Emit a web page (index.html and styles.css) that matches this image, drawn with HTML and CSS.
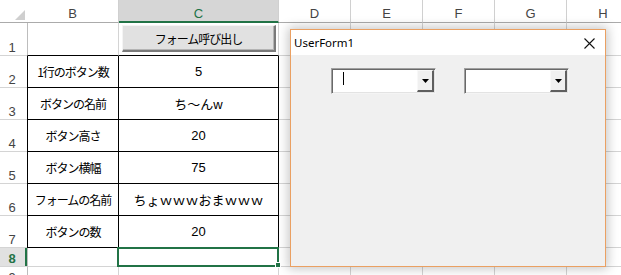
FILE: index.html
```html
<!DOCTYPE html>
<html lang="ja">
<head>
<meta charset="utf-8">
<link rel="stylesheet" href="styles.css">
</head>
<body>
<div class="sheet">
  <div class="hdr corner"><svg width="27" height="23" viewBox="0 0 27 23"><polygon points="25,10 25,20 15,20" fill="#cfcfcf"/></svg></div>
  <div class="hdr col b">B</div>
  <div class="hdr col sel">C</div>
  <div class="hdr col">D</div>
  <div class="hdr col">E</div>
  <div class="hdr col">F</div>
  <div class="hdr col">G</div>
  <div class="hdr col">H</div>

  <div class="rh">1</div>
  <div class="c b top"></div>
  <div class="c top btncell"><div class="xlbtn">フォーム呼び出し</div></div>
  <div class="c"></div><div class="c"></div><div class="c"></div><div class="c"></div><div class="c"></div>

  <div class="rh">2</div>
  <div class="c b t lbl">1行のボタン数</div>
  <div class="c t val">5</div>
  <div class="c"></div><div class="c"></div><div class="c"></div><div class="c"></div><div class="c"></div>

  <div class="rh">3</div>
  <div class="c b t lbl">ボタンの名前</div>
  <div class="c t val">ち～んw</div>
  <div class="c"></div><div class="c"></div><div class="c"></div><div class="c"></div><div class="c"></div>

  <div class="rh">4</div>
  <div class="c b t lbl">ボタン高さ</div>
  <div class="c t val">20</div>
  <div class="c"></div><div class="c"></div><div class="c"></div><div class="c"></div><div class="c"></div>

  <div class="rh">5</div>
  <div class="c b t lbl">ボタン横幅</div>
  <div class="c t val">75</div>
  <div class="c"></div><div class="c"></div><div class="c"></div><div class="c"></div><div class="c"></div>

  <div class="rh">6</div>
  <div class="c b t lbl">フォームの名前</div>
  <div class="c t val">ちょｗｗｗおまｗｗｗ</div>
  <div class="c"></div><div class="c"></div><div class="c"></div><div class="c"></div><div class="c"></div>

  <div class="rh">7</div>
  <div class="c b t lbl">ボタンの数</div>
  <div class="c t val">20</div>
  <div class="c"></div><div class="c"></div><div class="c"></div><div class="c"></div><div class="c"></div>

  <div class="rh rsel">8</div>
  <div class="c b"></div>
  <div class="c active"><span class="handle"></span></div>
  <div class="c"></div><div class="c"></div><div class="c"></div><div class="c"></div><div class="c"></div>

  <div class="rh">9</div>
  <div class="c b"></div>
  <div class="c"></div>
  <div class="c"></div><div class="c"></div><div class="c"></div><div class="c"></div><div class="c"></div>
</div>

<div class="form">
  <div class="titlebar">
    <span class="title">UserForm1</span>
    <svg class="close" width="11" height="11" viewBox="0 0 11 11"><path d="M0.5 0.5 L10.5 10.5 M10.5 0.5 L0.5 10.5" stroke="#111" stroke-width="1.1" fill="none"/></svg>
  </div>
  <div class="formbody">
    <div class="combo">
      <div class="field"><span class="caret"></span></div>
      <div class="drop"><svg width="7" height="4" viewBox="0 0 7 4"><polygon points="0,0 7,0 3.5,4" fill="#000"/></svg></div>
    </div>
    <div class="combo">
      <div class="field"></div>
      <div class="drop"><svg width="7" height="4" viewBox="0 0 7 4"><polygon points="0,0 7,0 3.5,4" fill="#000"/></svg></div>
    </div>
  </div>
</div>
</body>
</html>
```

FILE: styles.css
```css
* { box-sizing: border-box; }
html, body {
  margin: 0;
  padding: 0;
  background: #fff;
  overflow: hidden;
  width: 621px;
  height: 275px;
}
.sheet {
  display: grid;
  width: 640px;
  grid-template-columns: 27px 92px 160px 72px 72px 72px 72px 73px;
  grid-template-rows: 23px 33px repeat(6, 32px) 19px 19px;
  font-family: "Noto Sans CJK JP", sans-serif;
}
.hdr {
  border-bottom: 1px solid #ababab;
  border-right: 1px solid #d0d0d0;
  background: #fff;
  font-family: "Liberation Sans", Arial, sans-serif;
  font-size: 13px;
  color: #444;
  display: flex;
  align-items: flex-end;
  justify-content: center;
  padding-bottom: 1px;
  line-height: 15px;
}
.hdr.corner { border-right: none; padding: 0; display: block; }
.hdr.corner svg { display: block; }
.hdr.sel {
  background: #d6d6d6;
  color: #217346;
  border-bottom: 2px solid #217346;
  padding-bottom: 0;
}
.rh {
  border-bottom: 1px solid #d4d4d4;
  font-family: "Liberation Sans", Arial, sans-serif;
  font-size: 13px;
  color: #444;
  display: flex;
  align-items: flex-end;
  justify-content: center;
  padding-right: 3px;
  padding-bottom: 0;
  line-height: 15px;
}
.rh.rsel {
  background: #e1e1e1;
  color: #217346;
  font-weight: bold;
  box-shadow: inset -2px 0 0 #217346;
}
.c {
  border-right: 1px solid #d4d4d4;
  border-bottom: 1px solid #d4d4d4;
  position: relative;
}
.c.b { border-left: 1px solid #bdbdbd; }
.c.b.t { border-left-color: #000; }
.c.top { border-bottom-color: #000; }
.c.t {
  border-right-color: #000;
  border-bottom-color: #000;
  display: flex;
  align-items: center;
  justify-content: center;
  white-space: nowrap;
  color: #000;
}
.lbl {
  font-size: 12px;
  letter-spacing: -1px;
  padding-bottom: 1px;
}
.val {
  font-family: "Liberation Sans", "Noto Sans CJK JP", sans-serif;
  font-size: 13px;
  padding-bottom: 1px;
}
.btncell {
  padding: 2px 2px 3px 3px;
  display: flex;
}
.xlbtn {
  flex: 1;
  background: #e1e1e1;
  border-top: 1px solid #f4f4f4;
  border-left: 1px solid #f4f4f4;
  border-right: 2px solid #7a7a7a;
  border-bottom: 2px solid #7a7a7a;
  box-shadow: inset -1px -1px 0 #b4b4b4;
  display: flex;
  align-items: center;
  justify-content: center;
  font-family: "Noto Sans CJK JP", sans-serif;
  font-size: 12px;
  letter-spacing: -1px;
  color: #000;
}
.active::after {
  content: "";
  position: absolute;
  left: -2px;
  top: -1px;
  right: -1px;
  bottom: -1px;
  border: 2px solid #217346;
}
.handle {
  position: absolute;
  right: -3px;
  bottom: -2px;
  width: 6px;
  height: 6px;
  background: #217346;
  border: 1px solid #fff;
  z-index: 2;
}

/* user form window */
.form {
  position: absolute;
  left: 290px;
  top: 29px;
  width: 316px;
  height: 238px;
  border: 1px solid #eaa062;
  background: #f0f0f0;
  box-shadow: 0 0 10px 2px rgba(0, 0, 0, 0.22);
  display: flex;
  flex-direction: column;
  z-index: 5;
}
.titlebar {
  height: 25px;
  background: #fff;
  display: flex;
  align-items: center;
  justify-content: space-between;
  padding: 0 10px 0 3px;
}
.title {
  font-family: "Noto Sans", "Liberation Sans", sans-serif;
  font-size: 11.5px;
  color: #000;
}
.close { display: block; margin-top: 1px; }
.formbody {
  flex: 1;
  display: flex;
  align-items: flex-start;
  gap: 28px;
  padding: 13px 0 0 40px;
}
.combo {
  width: 105px;
  height: 26px;
  display: flex;
  background: #fff;
  border-top: 1px solid #a0a0a0;
  border-left: 1px solid #a0a0a0;
  border-right: 1px solid #f4f4f4;
  border-bottom: 1px solid #f4f4f4;
  box-shadow: inset 1px 1px 0 #696969, inset -1px -1px 0 #e3e3e3;
  padding: 1px 1px 1px 1px;
}
.field {
  flex: 1;
  position: relative;
}
.caret {
  position: absolute;
  left: 10px;
  top: 2px;
  width: 1px;
  height: 13px;
  background: #000;
}
.drop {
  width: 17px;
  background: #f0f0f0;
  border-top: 1px solid #f8f8f8;
  border-left: 1px solid #f8f8f8;
  border-right: 2px solid #5f5f5f;
  border-bottom: 2px solid #5f5f5f;
  display: flex;
  align-items: center;
  justify-content: center;
}
.drop svg { display: block; margin-top: 1px; }
```
